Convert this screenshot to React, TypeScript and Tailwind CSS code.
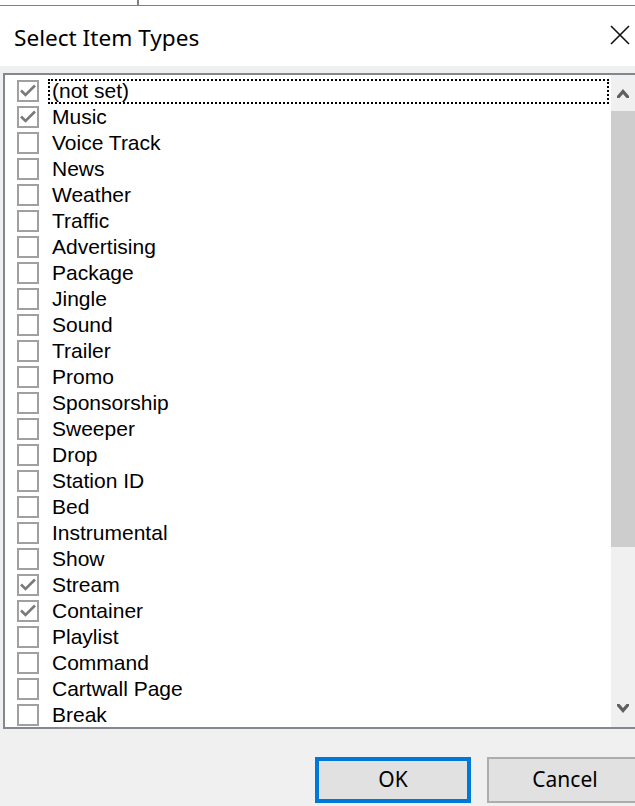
import React from 'react';

const itemTypes: { name: string; checked: boolean }[] = [
    { name: '(not set)', checked: true },
    { name: 'Music', checked: true },
    { name: 'Voice Track', checked: false },
    { name: 'News', checked: false },
    { name: 'Weather', checked: false },
    { name: 'Traffic', checked: false },
    { name: 'Advertising', checked: false },
    { name: 'Package', checked: false },
    { name: 'Jingle', checked: false },
    { name: 'Sound', checked: false },
    { name: 'Trailer', checked: false },
    { name: 'Promo', checked: false },
    { name: 'Sponsorship', checked: false },
    { name: 'Sweeper', checked: false },
    { name: 'Drop', checked: false },
    { name: 'Station ID', checked: false },
    { name: 'Bed', checked: false },
    { name: 'Instrumental', checked: false },
    { name: 'Show', checked: false },
    { name: 'Stream', checked: true },
    { name: 'Container', checked: true },
    { name: 'Playlist', checked: false },
    { name: 'Command', checked: false },
    { name: 'Cartwall Page', checked: false },
    { name: 'Break', checked: false },
];

function CheckBox({ checked }: { checked: boolean }) {
    return (
        <div className="w-[22px] h-[22px] border-2 border-[#a0a0a0] bg-white shrink-0">
            {checked && (
                <svg width="18" height="18" viewBox="0 0 18 18" className="block">
                    <polyline points="2,8.5 6.5,13 16,3.5" fill="none" stroke="#7a7a7a" strokeWidth="2.6" />
                </svg>
            )}
        </div>
    );
}

export default function App() {
    return (
        <div className="w-[635px] h-[806px] bg-[#f0f0f0] overflow-hidden flex flex-col">
            {/* title area */}
            <div className="bg-white h-[66px] shrink-0 flex flex-col">
                <div className="h-[6px] flex border-b border-[#808080]">
                    <div className="w-[137px]" />
                    <div className="w-[2px] bg-[#808080]" />
                </div>
                <div className="flex items-center justify-between pl-[14px] pr-[5px] pt-[16px]">
                    <span className="text-[22.6px] leading-[32px] text-black" style={{ fontFamily: '"Segoe UI", "Noto Sans", sans-serif' }}>
                        Select Item Types
                    </span>
                    <svg width="20" height="20" viewBox="0 0 20 20" className="-mt-[6px]">
                        <path d="M1 1 L19 19 M19 1 L1 19" stroke="#111" strokeWidth="1.6" fill="none" />
                    </svg>
                </div>
            </div>

            {/* list box */}
            <div className="mt-[7px] ml-[3px] w-[634px] h-[656px] shrink-0 border-2 border-[#828790] bg-white flex">
                <div className="flex-1 pt-[3px] overflow-hidden" style={{ fontFamily: '"Liberation Sans", Arial, sans-serif' }}>
                    {itemTypes.map((item, i) => (
                        <div key={item.name} className="h-[26px] flex items-center pl-[12px]">
                            <CheckBox checked={item.checked} />
                            <div
                                className={`ml-[9px] mr-[2px] flex-1 h-[25px] flex items-center pl-[2px] text-[21px] text-black ${i === 0 ? 'border-2 border-dotted border-black' : 'border-2 border-transparent'}`}
                            >
                                {item.name}
                            </div>
                        </div>
                    ))}
                </div>
                {/* scrollbar */}
                <div className="w-[24px] bg-[#f0f0f0] flex flex-col shrink-0">
                    <div className="h-[36px] flex items-center justify-center">
                        <svg width="12" height="10" viewBox="0 0 12 10">
                            <path d="M0 8 L6 1 L12 8 L12 10 L9.5 10 L6 6 L2.5 10 L0 10 Z" fill="#606060" />
                        </svg>
                    </div>
                    <div className="h-[436px] bg-[#cdcdcd]" />
                    <div className="flex-1" />
                    <div className="h-[36px] flex items-center justify-center">
                        <svg width="12" height="10" viewBox="0 0 12 10">
                            <path d="M0 2 L6 9 L12 2 L12 0 L9.5 0 L6 4 L2.5 0 L0 0 Z" fill="#606060" />
                        </svg>
                    </div>
                </div>
            </div>

            {/* buttons */}
            <div className="flex gap-[16px] pl-[315px] mt-[28px]" style={{ fontFamily: '"Segoe UI", "Noto Sans", sans-serif' }}>
                <button className="w-[156px] h-[46px] shrink-0 border-4 border-[#0078d7] bg-[#e1e1e1] text-[21px] text-black flex items-center justify-center">
                    OK
                </button>
                <button className="w-[156px] h-[46px] shrink-0 border-2 border-[#adadad] bg-[#e1e1e1] text-[21px] text-black flex items-center justify-center">
                    Cancel
                </button>
            </div>
        </div>
    );
}
